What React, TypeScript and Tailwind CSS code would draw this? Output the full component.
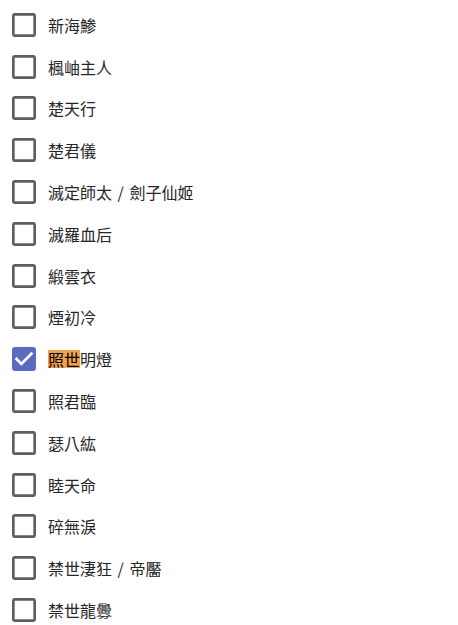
import React from "react";

const items: { label: string; checked?: boolean; hl?: string }[] = [
  { label: "新海鯵" },
  { label: "楓岫主人" },
  { label: "楚天行" },
  { label: "楚君儀" },
  { label: "滅定師太 / 劍子仙姬" },
  { label: "滅羅血后" },
  { label: "緞雲衣" },
  { label: "煙初冷" },
  { label: "照世明燈", checked: true, hl: "照世" },
  { label: "照君臨" },
  { label: "瑟八紘" },
  { label: "睦天命" },
  { label: "碎無淚" },
  { label: "禁世淒狂 / 帝靨" },
  { label: "禁世龍釁" },
];

function BoxIcon({ checked }: { checked?: boolean }) {
  if (checked) {
    return (
      <svg width="32" height="32" viewBox="0 0 24 24" className="shrink-0">
        <path
          fill="#5c6bc0"
          d="M19 3H5c-1.11 0-2 .9-2 2v14c0 1.1.89 2 2 2h14c1.1 0 2-.9 2-2V5c0-1.1-.9-2-2-2zm-9 14l-5-5 1.41-1.41L10 14.17l7.59-7.59L19 8l-9 9z"
        />
      </svg>
    );
  }
  return (
    <svg width="32" height="32" viewBox="0 0 24 24" className="shrink-0">
      <path
        fill="#5e5e5e"
        d="M19 5v14H5V5h14m0-2H5c-1.11 0-2 .9-2 2v14c0 1.1.89 2 2 2h14c1.1 0 2-.9 2-2V5c0-1.1-.9-2-2-2z"
      />
    </svg>
  );
}

function Label({ text }: { text: string }) {
  const parts = text.split(" / ");
  return (
    <>
      {parts.map((p, i) => (
        <React.Fragment key={i}>
          {i > 0 && <span className="px-[2px]"> / </span>}
          {p}
        </React.Fragment>
      ))}
    </>
  );
}

export default function App() {
  return (
    <div
      className="w-[458px] h-[625px] bg-white flex flex-col pt-[4px] overflow-hidden"
      style={{ fontFamily: '"Noto Sans CJK TC", "Noto Sans", sans-serif' }}
    >
      {items.map((it) => (
        <div key={it.label} className="h-[41.8px] flex items-center pl-[8px] gap-[8px] shrink-0">
          <BoxIcon checked={it.checked} />
          <span className="text-[16px] leading-[20px] text-[#262626]">
            {it.hl ? (
              <>
                <span className="inline-block bg-[#f0a050] text-black leading-[18px] h-[18px]">{it.hl}</span>
                {it.label.slice(it.hl.length)}
              </>
            ) : (
              <Label text={it.label} />
            )}
          </span>
        </div>
      ))}
    </div>
  );
}
